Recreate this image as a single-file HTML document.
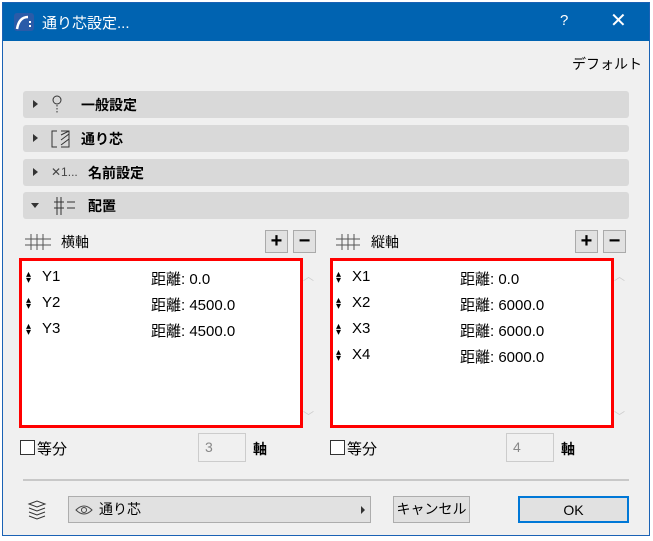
<!DOCTYPE html>
<html><head><meta charset="utf-8"><style>
*{box-sizing:border-box;margin:0;padding:0}
body{width:653px;height:541px;background:#fff;font-family:"Liberation Sans","Noto Sans CJK JP",sans-serif;font-size:14px;color:#000;position:relative;overflow:hidden}
.win{position:absolute;left:2px;top:2px;width:648px;height:534px;border:1px solid #1a62b5;background:#f0f0f0}
.title{position:absolute;left:0;top:0;width:646px;height:38px;background:#0063b1;color:#fff;font-size:15px}
.a{position:absolute}
.bar{position:absolute;left:20px;width:606px;height:27px;background:#d9d9d9;border-radius:3px}
.bar .t{position:absolute;left:56px;top:4px;font-weight:bold;font-size:14px}
.tri{position:absolute;left:10px;top:9px;width:0;height:0;border-top:4px solid transparent;border-bottom:4px solid transparent;border-left:5px solid #333}
.list{position:absolute;background:#fff;border:3px solid #f00}
.row{position:absolute;font-size:15px}
.ar{position:absolute;font-size:10px;line-height:6px}
.pm{position:absolute;width:23px;height:23px;background:#e1e1e1;border:1px solid #aaa;font-size:20px;font-weight:bold;text-align:center;line-height:20px}
.btn{position:absolute;top:493px;height:27px;background:#e1e1e1;border:1px solid #adadad;text-align:center;line-height:25px;font-size:14px}
.cb{position:absolute;width:15px;height:15px;border:1px solid #333;background:#fff}
.inp{position:absolute;width:48px;height:29px;border:1px solid #ccc;background:#f0f0f0;color:#888;font-size:14px;padding:5px 0 0 6px}
</style></head><body>
<div class="win">
<div class="title">
 <svg class="a" style="left:11px;top:10px" width="20" height="18"><rect x="0" y="0" width="20" height="18" rx="3" fill="#2a5ba8"/><path d="M3 16 Q5 4 14 4" stroke="#fff" stroke-width="2.5" fill="none"/><rect x="15" y="8" width="2" height="2" fill="#fff"/><rect x="15" y="12" width="2" height="2" fill="#fff"/></svg>
 <div class="a" style="left:39px;top:9px">通り芯設定...</div>
 <div class="a" style="left:557px;top:9px;font-size:15px">?</div>
 <div class="a" style="left:607px;top:5px;font-size:20px;font-weight:300">✕</div>
</div>
<div class="a" style="left:569px;top:51px;font-size:14px">デフォルト</div>

<div class="bar" style="top:88px"><div class="tri"></div><svg class="a" style="left:28px;top:4px" width="12" height="20"><circle cx="6" cy="5" r="4" fill="none" stroke="#333"/><path d="M6 10v9" stroke="#333" stroke-dasharray="1.5 1.5"/></svg><div class="t" style="left:58px">一般設定</div></div>
<div class="bar" style="top:122px"><div class="tri"></div><svg class="a" style="left:28px;top:5px" width="22" height="18"><path d="M6 1H1v16h5M10 1h8v16h-8M10 5l8-4M10 10l8-6M10 15l8-6" stroke="#333" fill="none"/></svg><div class="t" style="left:58px">通り芯</div></div>
<div class="bar" style="top:156px"><div class="tri"></div><div class="a" style="left:28px;top:6px;font-size:12px;color:#444">✕1...</div><div class="t" style="left:65px">名前設定</div></div>
<div class="bar" style="top:189px"><div class="a" style="left:8px;top:11px;border-left:4px solid transparent;border-right:4px solid transparent;border-top:5px solid #333"></div><svg class="a" style="left:30px;top:3px" width="24" height="22"><path d="M1 7h10M1 13h10M4 2v18M8 2v18M14 7h8M14 13h8" stroke="#333" fill="none"/></svg><div class="t" style="left:65px">配置</div></div>

<svg class="a" style="left:19px;top:228px" width="32" height="22"><g stroke="#555" fill="none"><path d="M3 8h26M3 14h26M9 3v16M15 3v16M21 3v16"/></g></svg>
<div class="a" style="left:58px;top:229px">横軸</div>
<div class="pm" style="left:262px;top:227px">+</div><div class="pm" style="left:290px;top:227px">−</div>
<svg class="a" style="left:330px;top:228px" width="30" height="22"><g stroke="#555" fill="none"><path d="M3 8h24M3 14h24M9 3v16M15 3v16M21 3v16"/></g></svg>
<div class="a" style="left:368px;top:229px">縦軸</div>
<div class="pm" style="left:572px;top:227px">+</div><div class="pm" style="left:600px;top:227px">−</div>

<div class="list" style="left:16px;top:255px;width:284px;height:170px"></div>
<div class="list" style="left:327px;top:255px;width:284px;height:170px"></div>
<div class="a" style="left:300px;top:265px;color:#ccc;font-size:11px">︿</div>
<div class="a" style="left:300px;top:405px;color:#ccc;font-size:11px">﹀</div>
<div class="a" style="left:611px;top:265px;color:#ccc;font-size:11px">︿</div>
<div class="a" style="left:611px;top:405px;color:#ccc;font-size:11px">﹀</div>

<div class="ar" style="left:23px;top:269px">▴<br>▾</div><div class="row" style="left:39px;top:265px">Y1</div><div class="row" style="left:148px;top:265px">距離: 0.0</div>
<div class="ar" style="left:23px;top:295px">▴<br>▾</div><div class="row" style="left:39px;top:291px">Y2</div><div class="row" style="left:148px;top:291px">距離: 4500.0</div>
<div class="ar" style="left:23px;top:321px">▴<br>▾</div><div class="row" style="left:39px;top:317px">Y3</div><div class="row" style="left:148px;top:317px">距離: 4500.0</div>

<div class="ar" style="left:333px;top:269px">▴<br>▾</div><div class="row" style="left:349px;top:265px">X1</div><div class="row" style="left:457px;top:265px">距離: 0.0</div>
<div class="ar" style="left:333px;top:295px">▴<br>▾</div><div class="row" style="left:349px;top:291px">X2</div><div class="row" style="left:457px;top:291px">距離: 6000.0</div>
<div class="ar" style="left:333px;top:321px">▴<br>▾</div><div class="row" style="left:349px;top:317px">X3</div><div class="row" style="left:457px;top:317px">距離: 6000.0</div>
<div class="ar" style="left:333px;top:347px">▴<br>▾</div><div class="row" style="left:349px;top:343px">X4</div><div class="row" style="left:457px;top:343px">距離: 6000.0</div>

<div class="cb" style="left:17px;top:437px"></div><div class="a" style="left:34px;top:435px;font-size:15px">等分</div>
<div class="inp" style="left:195px;top:430px">3</div><div class="a" style="left:250px;top:436px;font-weight:bold">軸</div>
<div class="cb" style="left:327px;top:437px"></div><div class="a" style="left:344px;top:435px;font-size:15px">等分</div>
<div class="inp" style="left:503px;top:430px">4</div><div class="a" style="left:558px;top:436px;font-weight:bold">軸</div>

<div class="a" style="left:20px;top:476px;width:606px;height:2px;background:#c8c8c8"></div>
<svg class="a" style="left:24px;top:497px" width="20" height="20"><g stroke="#333" fill="none"><path d="M2 4l8-3 8 3-8 3z M2 8l8 3 8-3 M2 12l8 3 8-3 M2 16l8 3 8-3"/></g></svg>
<div class="btn" style="left:65px;width:303px;text-align:left;padding-left:30px">通り芯</div>
<svg class="a" style="left:72px;top:501px" width="18" height="12"><path d="M1 6Q9 -2 17 6Q9 14 1 6z" stroke="#444" fill="none"/><circle cx="9" cy="6" r="2.5" stroke="#444" fill="none"/></svg>
<div class="a" style="left:358px;top:503px;border-top:4px solid transparent;border-bottom:4px solid transparent;border-left:4px solid #333"></div>
<div class="btn" style="left:390px;width:77px">キャンセル</div>
<div class="btn" style="left:515px;width:111px;border:2px solid #0078d7">OK</div>
</div>
</body></html>
